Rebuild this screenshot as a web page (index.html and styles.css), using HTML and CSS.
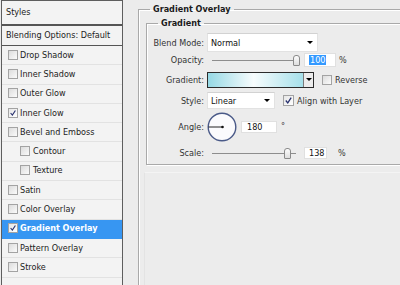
FILE: index.html
```html
<!DOCTYPE html>
<html lang="en">
<head>
  <meta charset="UTF-8" />
  <title>Layer Style</title>
  <link rel="stylesheet" href="styles.css">
</head>
<body>

<div class="styles-panel">
  <div class="panel-head">Styles</div>
  <div class="panel-blend">Blending Options: Default</div>
  <ul class="effects">
    <li><span class="check"></span>Drop Shadow</li>
    <li><span class="check"></span>Inner Shadow</li>
    <li><span class="check"></span>Outer Glow</li>
    <li><span class="check on"><svg viewBox="0 0 10 10"><path d="M2 5 L4.2 7.6 L8 1.8" /></svg></span>Inner Glow</li>
    <li><span class="check"></span>Bevel and Emboss</li>
    <li class="sub"><span class="check"></span>Contour</li>
    <li class="sub"><span class="check"></span>Texture</li>
    <li><span class="check"></span>Satin</li>
    <li><span class="check"></span>Color Overlay</li>
    <li class="active"><span class="check on"><svg viewBox="0 0 10 10"><path d="M2 5 L4.2 7.6 L8 1.8" /></svg></span>Gradient Overlay</li>
    <li><span class="check"></span>Pattern Overlay</li>
    <li><span class="check"></span>Stroke</li>
  </ul>
</div>

<div class="options">
  <fieldset class="group outer">
    <legend>Gradient Overlay</legend>
    <fieldset class="group inner">
      <legend>Gradient</legend>

      <div class="row row-blend">
        <label>Blend Mode:</label>
        <div class="select select-wide">Normal<span class="arrow"></span></div>
      </div>

      <div class="row row-opacity">
        <label>Opacity:</label>
        <div class="slider"><span class="track"></span><span class="thumb"></span></div>
        <div class="field field-pct"><span class="selected">100</span></div>
        <span class="unit">%</span>
      </div>

      <div class="row row-gradient">
        <label>Gradient:</label>
        <div class="gradient-pick"><span class="ramp"></span><span class="drop"><span class="arrow"></span></span></div>
        <span class="check box-reverse"></span>
        <span class="check-label">Reverse</span>
      </div>

      <div class="row row-style">
        <label>Style:</label>
        <div class="select select-narrow">Linear<span class="arrow"></span></div>
        <span class="check on box-align"><svg viewBox="0 0 10 10"><path d="M2 5 L4.2 7.6 L8 1.8" /></svg></span>
        <span class="check-label">Align with Layer</span>
      </div>

      <div class="row row-angle">
        <label>Angle:</label>
        <svg class="dial" viewBox="0 0 30 30">
          <circle cx="15" cy="15" r="13.8" />
          <line x1="1.5" y1="15" x2="15" y2="15" />
          <circle class="pin" cx="15.5" cy="15" r="1.3" />
        </svg>
        <div class="field field-angle">180</div>
        <span class="degree">°</span>
      </div>

      <div class="row row-scale">
        <label>Scale:</label>
        <div class="slider slider-scale"><span class="track"></span><span class="thumb"></span></div>
        <div class="field field-scale">138</div>
        <span class="unit unit-scale">%</span>
      </div>
    </fieldset>
    <div class="more"></div>
  </fieldset>
</div>

</body>
</html>
```

FILE: styles.css
```css
* {
  box-sizing: border-box;
}

html, body {
  margin: 0;
  height: 100%;
}

body {
  display: flex;
  background: #ececec;
  font: 9px "DejaVu Sans Condensed", "Liberation Sans", sans-serif;
  color: #222;
  overflow: hidden;
}

/* left list */
.styles-panel {
  width: 122px;
  margin-left: 1px;
  border: 1px solid #5e5e5e;
  border-bottom: none;
  background: #f3f3f3;
  display: flex;
  flex-direction: column;
  flex: 0 0 auto;
}

.panel-head {
  height: 25px;
  line-height: 23px;
  padding-left: 4px;
  border-bottom: 2px solid #555;
}

.panel-blend {
  height: 20px;
  line-height: 19px;
  padding-left: 4px;
  border-bottom: 1px solid #555;
}

.effects {
  list-style: none;
  margin: 0;
  padding: 0;
}

.effects li {
  height: 19.3px;
  display: flex;
  align-items: center;
  padding: 0 0 1px 6px;
  border-bottom: 1px solid #e2e2e2;
}

.effects li.sub {
  padding-left: 18px;
}

.effects li.sub .check {
  margin-right: 3px;
}

.effects li.active {
  background: #3796f2;
  color: #fff;
  font-weight: bold;
  border-bottom-color: #3796f2;
}

.check {
  width: 10px;
  height: 10px;
  flex: 0 0 auto;
  margin-right: 2px;
  border: 1px solid #a3a3a3;
  background: linear-gradient(135deg, #dcdcdc, #fbfbfb);
  display: flex;
}

.check.on {
  background: linear-gradient(135deg, #e6e6e6, #fff);
}

.check svg {
  width: 100%;
  height: 100%;
}

.check path {
  fill: none;
  stroke: #27306e;
  stroke-width: 1.4;
}

/* right options */
.options {
  flex: 1;
  overflow: hidden;
}

.group {
  margin: 0;
  padding: 0;
  border: 1px solid #a9a9a9;
  box-shadow: inset 1px 1px 0 #fff, 1px 1px 0 #fff;
}

.group legend {
  margin-left: 11px;
  padding: 0 3px;
  line-height: 12px;
  font-weight: bold;
  color: #1a1a1a;
}

.outer {
  margin: 3px 0 0 15px;
  width: 275px;
  height: 300px;
}

.inner {
  margin: 2px 9px 0 7px;
  padding-bottom: 4px;
}

.more {
  margin: 7px 0 0 5px;
  height: 140px;
  border-left: 1px solid #e3e3e3;
  border-top: 1px solid #f4f4f4;
}

.row {
  display: flex;
  align-items: center;
}

.row label {
  width: 57px;
  margin-right: 3px;
  text-align: right;
  color: #333;
}

.row-blend {
  margin-top: 4px;
  height: 19px;
}

.row-opacity {
  height: 16px;
}

.row-gradient {
  margin-top: 3px;
  height: 17px;
}

.row-style {
  margin-top: 4px;
  height: 17px;
}

.row-angle {
  margin-top: 3px;
  height: 30px;
}

.row-scale {
  margin-top: 4px;
  height: 14px;
}

.select {
  height: 100%;
  display: flex;
  align-items: center;
  justify-content: space-between;
  padding: 0 4px 0 3px;
  background: #fff;
  border: 1px solid #e2e2e2;
  border-top-color: #d2d2d2;
  color: #111;
}

.select-wide {
  width: 111px;
}

.select-narrow {
  width: 68px;
}

.arrow {
  width: 0;
  height: 0;
  border-left: 3px solid transparent;
  border-right: 3px solid transparent;
  border-top: 3px solid #000;
}

.slider {
  width: 94px;
  height: 12px;
  position: relative;
}

.track {
  position: absolute;
  left: 5px;
  right: 2px;
  top: 6px;
  height: 1px;
  background: #8d8d8d;
}

.thumb {
  position: absolute;
  left: 86px;
  top: 1px;
  width: 7px;
  height: 11px;
  border: 1px solid #8a8a8a;
  border-radius: 3px 3px 1px 1px;
  background: linear-gradient(#fdfdfd, #dedede);
}

.slider-scale .track {
  right: 5px;
}

.slider-scale .thumb {
  left: 77px;
}

.field {
  height: 14px;
  background: #fff;
  border: 1px solid #e0e0e0;
  padding-left: 4px;
  line-height: 12px;
  color: #111;
}

.field-pct {
  width: 32px;
  margin-left: 3px;
}

.selected {
  background: #3399ff;
  color: #fff;
  padding: 0 1px;
}

.unit {
  margin-left: 3px;
  color: #333;
}

.field-scale {
  width: 23px;
  height: 12px;
  line-height: 10px;
  margin-left: 3px;
}

.unit-scale {
  margin-left: 11px;
}

.gradient-pick {
  width: 107px;
  height: 16px;
  display: flex;
  border: 1px solid #2b2b2b;
}

.ramp {
  flex: 1;
  background: linear-gradient(to right, #96d9e5, #f7fcfd 48%, #a6e0ea);
}

.drop {
  width: 10px;
  display: flex;
  align-items: center;
  justify-content: center;
  border-left: 1px solid #7a7a7a;
  background: #ececec;
}

.box-reverse {
  margin-left: 8px;
  margin-right: 3px;
}

.box-align {
  width: 11px;
  height: 11px;
  margin-left: 8px;
  margin-right: 3px;
}

.check-label {
  color: #333;
}

.dial {
  width: 30px;
  height: 30px;
}

.dial circle {
  fill: #fbfbfd;
  stroke: #4a5a88;
  stroke-width: 1.4;
}

.dial line {
  stroke: #222;
  stroke-width: 1;
}

.dial .pin {
  fill: #111;
  stroke: none;
}

.field-angle {
  width: 36px;
  height: 12px;
  line-height: 10px;
  margin-left: 4px;
  padding-left: 5px;
}

.degree {
  margin-left: 4px;
  align-self: flex-start;
  margin-top: 9px;
  color: #333;
}
```
